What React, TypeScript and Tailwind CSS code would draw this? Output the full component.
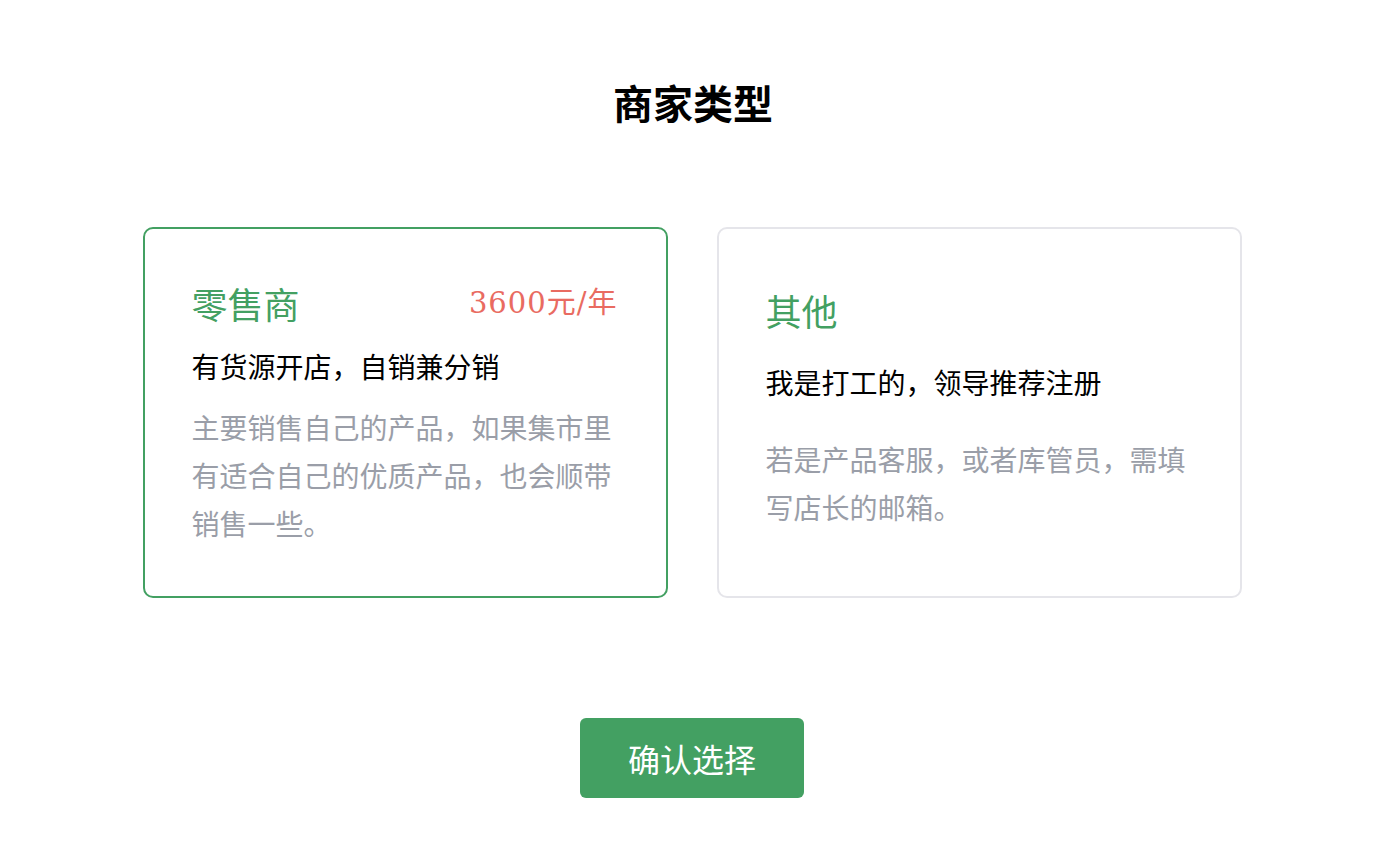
import React, { useState } from 'react';

const cjk = '"Noto Sans CJK SC", "Noto Sans", sans-serif';

interface Option {
  id: string;
  name: string;
  price?: string;
  tagline: string;
  detail: string;
}

const options: Option[] = [
  {
    id: 'retail',
    name: '零售商',
    price: '3600元/年',
    tagline: '有货源开店，自销兼分销',
    detail: '主要销售自己的产品，如果集市里有适合自己的优质产品，也会顺带销售一些。',
  },
  {
    id: 'other',
    name: '其他',
    tagline: '我是打工的，领导推荐注册',
    detail: '若是产品客服，或者库管员，需填写店长的邮箱。',
  },
];

const App: React.FC = () => {
  const [selected, setSelected] = useState('retail');

  return (
    <div className="min-h-screen bg-white flex flex-col items-center" style={{ fontFamily: cjk }}>
      <h1 className="mt-[74px] text-[40px] leading-[56px] font-bold text-black">商家类型</h1>

      {/* slight left nudge to line up with the reference */}
      <div className="mt-[97px] w-full flex justify-center pr-[2px]">
        <div className="flex gap-[49px]">
          {options.map((opt) => {
            const active = opt.id === selected;
            const isRetail = opt.id === 'retail';
            return (
              <button
                key={opt.id}
                type="button"
                onClick={() => setSelected(opt.id)}
                className={`w-[525px] h-[371px] rounded-[10px] border-2 bg-white pl-[47px] pr-[48px] flex flex-col justify-center text-left ${
                  active ? 'border-[#43a062]' : 'border-[#e5e5ea]'
                } ${isRetail ? '' : 'pb-[6px]'}`}
              >
                <div className={`flex items-center justify-between h-[44px] ${isRetail ? 'mt-[2px]' : ''}`}>
                  <span className="text-[36px] leading-[44px] text-[#43a062]">{opt.name}</span>
                  {opt.price && (
                    <span
                      className="text-[29px] leading-[44px] tracking-[1px] text-[#e96b61]"
                      style={{ fontFamily: '"DejaVu Serif", "Noto Sans CJK SC", serif' }}
                    >
                      {opt.price}
                    </span>
                  )}
                </div>
                <p className={`text-[28px] leading-[40px] text-black ${isRetail ? 'mt-[21px]' : 'mt-[30px]'}`}>
                  {opt.tagline}
                </p>
                <p className={`text-[28px] leading-[48px] text-[#9a9ea8] ${isRetail ? 'mt-[17px]' : 'mt-[33px]'}`}>
                  {opt.detail}
                </p>
              </button>
            );
          })}
        </div>
      </div>

      <button
        type="button"
        className="mt-[120px] mr-[2px] w-[224px] h-[80px] rounded-[6px] bg-[#43a062] text-white text-[32px] leading-none"
      >
        确认选择
      </button>
    </div>
  );
};

export default App;
